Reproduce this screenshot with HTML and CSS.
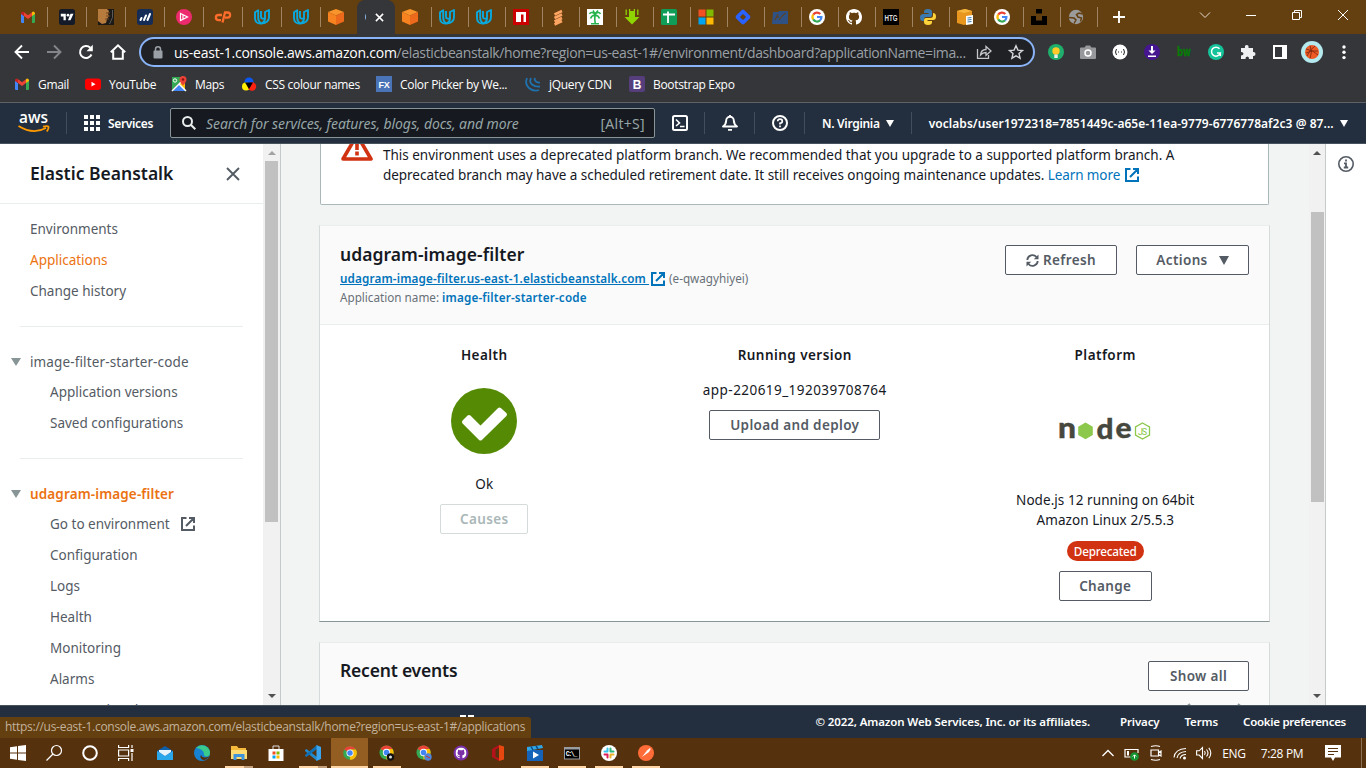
FILE: index.html
```html
<!DOCTYPE html>
<html lang="en">
<head>
<meta charset="utf-8">
<title>Elastic Beanstalk</title>
<link rel="stylesheet" href="styles.css">
</head>
<body>
<svg class="defs" width="0" height="0">
  <symbol id="gmail" viewBox="0 0 16 16"><path fill="#4285f4" d="M1 4v9q0 1 1 1h2V7z"/><path fill="#34a853" d="M15 4v9q0 1-1 1h-2V7z"/><path fill="#c5221f" d="M1 4.500q0-2 2-2l1 .7V7L1 5z"/><path fill="#fbbc04" d="M15 4.500q0-2-2-2l-1 .7V7l3-2z"/><path fill="#ea4335" d="M4 3.200l4 3 4-3V7l-4 3-4-3z"/></symbol>
  <symbol id="udacity" viewBox="0 0 16 16"><path fill="none" stroke="#0aa9dd" stroke-width="1.900" stroke-linejoin="round" d="M1 3.200L4.200 1.300V9q0 3.500 3.300 5.500Q1 15 1 9zM7.500 14.500Q15 14 15 8V1L11 3v6.500q0 3-3.500 5M7 2v6q0 2 4 1.500"/></symbol>
  <symbol id="cube" viewBox="0 0 16 16"><path fill="#f9932b" d="M8 0l8 3-8 3.500L0 3z"/><path fill="#f68220" d="M0 3l8 3.500V16l-8-3.500z"/><path fill="#ed6a1c" d="M16 3L8 6.500V16l8-3.500z"/></symbol>
  <symbol id="google" viewBox="0 0 16 16"><circle cx="8" cy="8" r="8" fill="#fff"/><g fill="none" stroke-width="2.200"><path stroke="#ea4335" d="M4.200 5.600A4.500 4.500 0 0 1 11.300 5"/><path stroke="#fbbc05" d="M4.200 5.600A4.500 4.500 0 0 0 4.200 10.400"/><path stroke="#34a853" d="M4.200 10.400A4.500 4.500 0 0 0 11 11.400"/><path stroke="#4285f4" d="M11 11.400A4.500 4.500 0 0 0 12.400 8H8"/></g></symbol>
  <symbol id="ext" viewBox="0 0 14 14"><path fill="none" stroke="currentColor" stroke-width="2" d="M5.500 1H1v12h12V8.500M8 1h5v5M12.500 1.500L5 9"/></symbol>
  <symbol id="chrome" viewBox="0 0 16 16"><circle cx="8" cy="8" r="7.500" fill="#34a853"/><path fill="#ea4335" d="M8 8L1.500 4.200A7.500 7.500 0 0 1 14.500 4.200H8z"/><path fill="#fbbc05" d="M8 8h-.5L8 15.500A7.500 7.500 0 0 0 14.500 4.200H8z"/><circle cx="8" cy="8" r="3.900" fill="#fff"/><circle cx="8" cy="8" r="3" fill="#4285f4"/></symbol>
  <symbol id="github" viewBox="0 0 16 16"><path d="M8 0C3.580 0 0 3.580 0 8c0 3.540 2.290 6.530 5.470 7.590.4.070.55-.17.55-.38 0-.19-.01-.82-.01-1.490-2.010.37-2.530-.49-2.690-.94-.09-.23-.48-.94-.82-1.130-.28-.15-.68-.52-.01-.53.63-.01 1.080.58 1.230.82.72 1.210 1.870.87 2.330.66.070-.52.28-.87.51-1.070-1.780-.2-3.640-.89-3.640-3.950 0-.87.31-1.590.82-2.150-.08-.2-.36-1.020.08-2.120 0 0 .67-.21 2.200.82.64-.18 1.320-.27 2-.27s1.360.09 2 .27c1.530-1.040 2.200-.82 2.200-.82.44 1.100.16 1.920.08 2.120.51.56.82 1.270.82 2.150 0 3.070-1.870 3.750-3.650 3.950.29.25.54.73.54 1.480 0 1.070-.01 1.930-.01 2.200 0 .21.15.46.55.38A8 8 0 0 0 16 8c0-4.420-3.580-8-8-8z"/></symbol>
</svg>

<div class="tabstrip">
  <div class="tabs tabs-wide">
    <span class="tab"><svg><use href="#gmail"/></svg></span>
    <span class="tab"><svg viewBox="0 0 16 16"><rect width="16" height="16" rx="2.500" fill="#141a27"/><path fill="#fff" d="M1.800 4.800h5v6.500H4.500V7.500H1.800zM11.500 4.800h3l-3 6.500H9z"/><circle cx="9" cy="6.200" r="1.400" fill="#fff"/></svg></span>
    <span class="tab"><svg viewBox="0 0 16 16"><rect width="16" height="16" fill="#1c1a18"/><path fill="#b87b3e" d="M0 0h9l2 2-1 3 1 2-2 3-1 4-4 1-4-3z"/><path stroke="#6a431e" d="M8 4h4M8 7h4M7 10h4"/><path stroke="#5c5a57" d="M14.500 1q1.500 8-3 14" fill="none"/></svg></span>
    <span class="tab"><svg viewBox="0 0 16 16"><rect width="16" height="16" rx="3" fill="#142c56"/><path stroke="#fff" stroke-width="2" stroke-linecap="round" d="M3.500 11l1-2M7 11l2-4.500M10.500 11l2.500-6"/></svg></span>
    <span class="tab"><svg viewBox="0 0 16 16"><circle cx="8" cy="8" r="8" fill="#ee2a6e"/><path fill="none" stroke="#fff" stroke-width="1.200" d="M4.500 4.500v7l7-3.500zM7 6v4"/></svg></span>
    <span class="tab"><svg viewBox="0 0 16 16"><path fill="none" stroke="#ff6c2c" stroke-width="2.300" d="M7 6H3.500a2.600 2.600 0 0 0 0 5.200H6M7.500 13.500L10 3.500h2.500a2.600 2.600 0 0 1 0 5.200H10"/></svg></span>
    <span class="tab"><svg><use href="#udacity"/></svg></span>
    <span class="tab"><svg><use href="#udacity"/></svg></span>
  </div>
  <span class="tab tab-before"><svg><use href="#cube"/></svg></span>
  <div class="tab-active"><i></i><svg viewBox="0 0 10 10"><path stroke="#fff" stroke-width="1.700" d="M1 1l8 8M9 1L1 9"/></svg></div>
  <div class="tabs tabs-narrow">
    <span class="tab"><svg><use href="#cube"/></svg></span>
    <span class="tab"><svg><use href="#udacity"/></svg></span>
    <span class="tab"><svg><use href="#udacity"/></svg></span>
    <span class="tab"><svg viewBox="0 0 16 16"><rect width="16" height="16" fill="#c00"/><path fill="#fff" d="M3 3h10v10h-2.500V5.500H8V13H3z"/></svg></span>
    <span class="tab"><svg viewBox="0 0 16 16"><path stroke="#fda463" stroke-width="2.600" d="M4.500 5.500L12 2M4.500 9L12 5.500M4.500 12.500L12 9M4.500 15.500L12 12"/></svg></span>
    <span class="tab"><svg viewBox="0 0 16 16"><rect width="16" height="16" fill="#fff"/><g fill="none" stroke="#27b34b" stroke-width="1.600"><path d="M8 6q-.7 4 .3 9M4 14.700h8M8 5Q4 2 2.500 5M8 5q4-3 5.500 0M8 6Q5 6 3.500 9.500M8 6q3 0 4.500 3.500M8 5L6 1.500M8 5l3-3.500"/></g></svg></span>
    <span class="tab"><svg viewBox="0 0 16 16"><path fill="#8fd400" d="M5 2h6v6h4.500L8 15.500.5 8H5z"/><path stroke="#8fd400" stroke-width="1.300" d="M2.200.500v5.500M13.800.500v5.500M5.600 0v2M10.400 0v2"/></svg></span>
    <span class="tab"><svg viewBox="0 0 16 16"><rect width="16" height="16" rx="1.500" fill="#0f9d58"/><path stroke="#fff" stroke-width="1.800" d="M2 5.500h12M7 2.500V14"/></svg></span>
    <span class="tab"><svg viewBox="0 0 16 16"><path fill="#f25022" d="M.5.500h7v7h-7z"/><path fill="#7fba00" d="M8.500.500h7v7h-7z"/><path fill="#00a4ef" d="M.5 8.500h7v7h-7z"/><path fill="#ffb900" d="M8.500 8.500h7v7h-7z"/></svg></span>
    <span class="tab"><svg viewBox="0 0 16 16"><rect x="2.200" y="2.200" width="11.600" height="11.600" rx="2" transform="rotate(45 8 8)" fill="#2962ff"/><rect x="5.800" y="5.800" width="4.400" height="4.400" transform="rotate(45 8 8)" fill="#643f0f"/></svg></span>
    <span class="tab"><svg viewBox="0 0 16 16"><path fill="#2f5183" d="M1 3h5l1-1h9v13H0z"/><path fill="none" stroke="#643f0f" d="M3 11l3-6M4 8h3M7 11l4-5 3-2"/></svg></span>
    <span class="tab"><svg><use href="#google"/></svg></span>
    <span class="tab"><svg fill="#fff"><use href="#github"/></svg></span>
    <span class="tab"><svg viewBox="0 0 16 16"><rect width="16" height="16" fill="#000"/><text class="t-htg" x="1.500" y="11.500" textLength="13" lengthAdjust="spacingAndGlyphs">HTG</text></svg></span>
    <span class="tab"><svg viewBox="0 0 16 16"><path fill="#3b7bb0" d="M8 0C5 0 4 1 4 3v1h4.500v1H3Q0 5 0 8.500T3 12h1v-2q0-2 2-2h4q2 0 2-2V3q0-3-4-3z"/><path fill="#ffd43b" d="M8 16c3 0 4-1 4-3v-1H7.500v-1H13q3 0 3-3.500T13 4v2.500Q13 9 10 9H6q-2 0-2 2v2q0 3 4 3z"/></svg></span>
    <span class="tab"><svg viewBox="0 0 16 16"><path fill="#e8961e" d="M0 2l8-2 7 2v12l-8 2-7-2z"/><path fill="#f7b73f" d="M0 2l8-2 7 2-8 2z"/><path fill="#fff" d="M9 7l7-1v9l-7 1z"/><path stroke="#3a7fb5" stroke-width="1.200" d="M10.500 9l4-.5M10.500 11l4-.5M10.500 13l4-.5"/></svg></span>
    <span class="tab"><svg><use href="#google"/></svg></span>
    <span class="tab"><svg viewBox="0 0 16 16"><path fill="#000" d="M5 0h6v4.500H5zM0 7h5v4.500h6V7h5v9H0z"/></svg></span>
    <span class="tab"><svg viewBox="0 0 16 16"><circle cx="8" cy="8" r="7.200" fill="#9b9b9c"/><path fill="none" stroke="#643f0f" stroke-width="1.500" d="M1 8.500l5 .5 2 2-2 3.500M14.500 5L11 4 8.500 5.500 10 8l3.500 1-1 3.500"/></svg></span>
  </div>
  <svg class="newtab" viewBox="0 0 12 12"><path stroke="#fff" stroke-width="1.900" d="M6 0v12M0 6h12"/></svg>
  <div class="winctl">
    <svg viewBox="0 0 12 12"><path fill="none" stroke="#e8ddd0" d="M1 3.500l5 5 5-5"/></svg>
    <svg viewBox="0 0 12 12"><path stroke="#fff" d="M1 6.500h10"/></svg>
    <svg viewBox="0 0 12 12"><path fill="none" stroke="#fff" d="M1.500 3.500h7v7h-7zM3.500 3.500v-2h7v7h-2"/></svg>
    <svg viewBox="0 0 12 12"><path stroke="#fff" d="M1 1l10 10M11 1L1 11"/></svg>
  </div>
</div>

<div class="toolbar">
  <div class="navbtns">
    <svg viewBox="0 0 16 16"><path fill="none" stroke="#fff" stroke-width="1.900" d="M15 8H2M8 1.500L1.500 8 8 14.500"/></svg>
    <svg viewBox="0 0 16 16"><path fill="none" stroke="#84858a" stroke-width="1.900" d="M1 8h13M8 1.500L14.500 8 8 14.500"/></svg>
    <svg viewBox="0 0 16 16"><path fill="none" stroke="#fff" stroke-width="2" d="M13.500 10.500A6 6 0 1 1 12.300 3.800"/><path fill="#fff" d="M14.800.800v6.400H8.500z"/></svg>
    <svg viewBox="0 0 16 16"><path fill="none" stroke="#fff" stroke-width="2" d="M.8 8.200L8 1.300l7.200 6.900M3.200 7v7.700h9.600V7"/></svg>
  </div>
  <div class="omnibox">
    <svg class="lock" viewBox="0 0 10 13"><rect y="4.500" x=".5" width="9" height="8" rx="1" fill="#9aa0a6"/><path fill="none" stroke="#9aa0a6" stroke-width="1.500" d="M2.500 5V3.200a2.500 2.500 0 0 1 5 0V5"/></svg>
    <span class="url"><b>us-east-1.console.aws.amazon.com</b>/elasticbeanstalk/home?region=us-east-1#/environment/dashboard?applicationName=ima...</span>
    <svg class="share" viewBox="0 0 16 16"><path fill="none" stroke="#c4c7ca" stroke-width="1.300" d="M1.500 5v9.300h11V11M4.500 11Q5 5.500 10 5.500V2.500L15 7l-5 4.300V8.500Q6.500 8.500 4.500 11z"/></svg>
    <svg class="star" viewBox="0 0 16 16"><path fill="none" stroke="#d5d7da" stroke-width="1.400" d="M8 1.800l1.900 4.300 4.600.4-3.500 3.100 1.100 4.600L8 11.800l-4.100 2.400L5 9.600 1.500 6.500l4.600-.4z"/></svg>
  </div>
  <div class="exts">
    <svg viewBox="0 0 16 16"><circle cx="8" cy="8" r="8" fill="#1fae6b"/><circle cx="8" cy="7" r="3.700" fill="#ffc928"/><path fill="#eee" d="M6.300 10.500h3.400V14H6.300z"/></svg>
    <svg viewBox="0 0 16 16"><path fill="#97989b" d="M1 3.500h3.500L6 1.500h4l1.500 2H15q1 0 1 1V14q0 1-1 1H1q-1 0-1-1V4.500q0-1 1-1z"/><circle cx="8" cy="9" r="3" fill="none" stroke="#fff" stroke-width="1.500"/></svg>
    <svg viewBox="0 0 16 16"><circle cx="8" cy="8" r="7.500" fill="#fff"/><path fill="none" stroke="#222" d="M4.500 5Q2.500 8 4.500 11M11.500 5q2 3 0 6M6 8h1M9 8h1"/></svg>
    <svg viewBox="0 0 16 16"><circle cx="8" cy="8" r="8" fill="#45168f"/><path fill="#fff" d="M7 2h2v4.500h2.500L8 10 4.500 6.500H7zM4 11.500h8V13H4z"/></svg>
    <svg viewBox="0 0 16 16"><text class="t-bw" x="1" y="12" textLength="14" lengthAdjust="spacingAndGlyphs">bw</text></svg>
    <svg viewBox="0 0 16 16"><circle cx="8" cy="8" r="8" fill="#15c39a"/><path fill="none" stroke="#fff" stroke-width="1.500" d="M11.500 4.800A4.500 4.500 0 1 0 12.300 9H9M12.300 9v3"/></svg>
    <svg viewBox="0 0 16 16"><path fill="#eff0f2" d="M1 4h4q-.6-3 1.700-3T8.500 4H13v4q2.500-.3 2.500 2T13 12v3H9q.3-2.500-1.700-2.500T5.500 15H1v-3.500q2.500 0 2.500-1.800T1 8z"/></svg>
    <svg viewBox="0 0 16 16"><path fill="#fff" d="M1 1h14v14H1z"/><path fill="#35363a" d="M3 3h7v10H3z"/></svg>
    <svg class="avatar" viewBox="0 0 22 22"><circle cx="11" cy="11" r="11" fill="#b4e9ee"/><circle cx="11" cy="11" r="7" fill="#ed5a24"/><path fill="none" stroke="#7a2610" stroke-width=".8" d="M5 8q7 1 12 6M9 4.500q3 6 0 13M14 5q-6 4-8 10M5 12q6-3 12-2"/></svg>
    <svg viewBox="0 0 16 16"><g fill="#fff"><circle cx="8" cy="3" r="1.700"/><circle cx="8" cy="8.300" r="1.700"/><circle cx="8" cy="13.600" r="1.700"/></g></svg>
  </div>
</div>

<div class="bookmarks">
  <span style="width:71px"><svg><use href="#gmail"/></svg>Gmail</span>
  <span style="width:86px"><svg viewBox="0 0 16 16"><rect y="2.500" width="16" height="11.500" rx="3" fill="red"/><path fill="#fff" d="M6.500 5.800v4.800l4-2.400z"/></svg>YouTube</span>
  <span style="width:70px"><svg viewBox="0 0 16 16"><path fill="#34a853" d="M1 1h13L1 14z"/><path fill="#4285f4" d="M8 8l7 7H2z"/><path fill="#fbbc04" d="M14 2v12L8 8z"/><path stroke="#fff" stroke-width="1.500" d="M1 15L14 2M8 8l7 7"/><path fill="#ea4335" d="M12 0a3.500 3.500 0 0 1 3.500 3.500Q15.500 6 12 9.500 8.500 6 8.500 3.500A3.500 3.500 0 0 1 12 0z"/><circle cx="12" cy="3.500" r="1.200" fill="#811"/><circle cx="4" cy="4.500" r="1.700" fill="none" stroke="#fff"/></svg>Maps</span>
  <span style="width:135px"><svg viewBox="0 0 16 16"><circle cx="8" cy="6" r="4.500" fill="#0b59f5"/><circle cx="5" cy="10.500" r="4" fill="#fe0"/><circle cx="11" cy="10.500" r="4.200" fill="#f21"/><path d="M4 6.500h8L8 13z"/></svg>CSS colour names</span>
  <span style="width:149px"><svg viewBox="0 0 16 16"><rect width="16" height="16" fill="#4a74b8"/><text class="t-fx" x="2.500" y="11.500" textLength="11">FX</text></svg>Color Picker by We...</span>
  <span style="width:104px"><svg viewBox="0 0 16 16"><g fill="none" stroke="#1f72ae" stroke-width="1.800"><path d="M2 2Q-.5 8 4 12t10 2"/><path d="M6 2q-2 4 1 6.500t8 2"/><path d="M10 2q-1 2 1 3.500t4 1"/></g></svg>jQuery CDN</span>
  <span><svg viewBox="0 0 16 16"><rect width="16" height="16" rx="2" fill="#563d7c"/><text class="t-b" x="3.800" y="12.500">B</text></svg>Bootstrap Expo</span>
</div>

<header class="aws">
  <svg class="awslogo" viewBox="0 0 32 22"><text class="t-aws" x="1" y="11" textLength="29" lengthAdjust="spacingAndGlyphs">aws</text><path fill="none" stroke="#f90" stroke-width="1.800" d="M.5 14Q15 23 28 16M25 14.600q5-1.200 5.500.3t-1.700 4.600"/></svg>
  <i class="vsep"></i>
  <svg class="grid" viewBox="0 0 16 16"><path fill="#fff" d="M0 0h4v4H0zM6 0h4v4H6zM12 0h4v4h-4zM0 6h4v4H0zM6 6h4v4H6zM12 6h4v4h-4zM0 12h4v4H0zM6 12h4v4H6zM12 12h4v4h-4z"/></svg>
  <b class="services">Services</b>
  <div class="search"><svg viewBox="0 0 14 14"><path fill="none" stroke="#eaeded" stroke-width="2" d="M9.300 9.300L13.300 13.300M1 5.500a4.500 4.500 0 1 0 9 0a4.500 4.500 0 1 0-9 0"/></svg><em>Search for services, features, blogs, docs, and more</em><span>[Alt+S]</span></div>
  <div class="awsicons">
    <svg viewBox="0 0 16 16"><rect x="1" y="1" width="14" height="14" rx="1.500" fill="none" stroke="#fff" stroke-width="2"/><path fill="none" stroke="#fff" stroke-width="1.600" d="M4 4.500L7.500 8 4 11M8 11.500h4.500"/></svg><i class="vsep"></i>
    <svg viewBox="0 0 16 16"><path fill="none" stroke="#fff" stroke-width="1.900" stroke-linejoin="round" d="M1 11.500Q4 9.500 4.200 5.500a3.800 3.800 0 0 1 7.600 0Q12 9.500 15 11.500zM8 0v2M6 14.900h4"/></svg><i class="vsep"></i>
    <svg viewBox="0 0 16 16"><circle cx="8" cy="8" r="7" fill="none" stroke="#fff" stroke-width="2"/><path fill="none" stroke="#fff" stroke-width="1.700" d="M5.700 6.300Q5.700 4.200 8 4.200t2.300 2Q10.300 8 8 8.300v1.200M8 10.600v1.700"/></svg><i class="vsep"></i>
  </div>
  <b class="region">N. Virginia</b><i class="caret"></i>
  <i class="vsep vsep-user"></i>
  <b class="user">voclabs/user1972318=7851449c-a65e-11ea-9779-6776778af2c3 @ 87...</b><i class="caret"></i>
</header>

<div class="page">
  <aside class="side">
    <div class="side-head"><h2>Elastic Beanstalk</h2><svg viewBox="0 0 14 14"><path stroke="#545b64" stroke-width="1.900" d="M1 1l12 12M13 1L1 13"/></svg></div>
    <nav>
      <a>Environments</a><a class="hot">Applications</a><a>Change history</a>
      <hr>
      <a class="group">image-filter-starter-code</a>
      <a class="sub">Application versions</a><a class="sub">Saved configurations</a>
      <hr>
      <a class="group hot strong">udagram-image-filter</a>
      <a class="sub">Go to environment<svg><use href="#ext"/></svg></a><a class="sub">Configuration</a><a class="sub">Logs</a><a class="sub">Health</a><a class="sub">Monitoring</a><a class="sub">Alarms</a><a class="sub">Managed updates</a>
    </nav>
  </aside>
  <div class="sbar sbar-side"><i class="up dim"></i><i class="thumb"></i><i class="down"></i></div>
  <main>
    <section class="alert">
      <svg viewBox="0 0 32 28"><path fill="none" stroke="#d13212" stroke-width="3.600" stroke-linejoin="round" d="M16 2L30 26H2z"/><path stroke="#d13212" stroke-width="3.600" d="M16 8v9M16 18.500v4"/></svg>
      <p><span class="l1">This environment uses a deprecated platform branch. We recommended that you upgrade to a supported platform branch. A</span><br><span class="l2">deprecated branch may have a scheduled retirement date. It still receives ongoing maintenance updates.</span> <a>Learn more<svg><use href="#ext"/></svg></a></p>
    </section>
    <section class="card">
      <div class="card-head">
        <div>
          <h1>udagram-image-filter</h1>
          <p class="envurl"><a>udagram-image-filter.us-east-1.elasticbeanstalk.com </a><svg><use href="#ext"/></svg><span>(e-qwagyhiyei)</span></p>
          <p class="appname">Application name: <b>image-filter-starter-code</b></p>
        </div>
        <div class="actions">
          <button style="width:112px"><svg viewBox="0 0 13 13"><path fill="none" stroke="#545b64" stroke-width="1.800" d="M1.300 6A5.200 5.200 0 0 1 10.500 3M11.700 7A5.200 5.200 0 0 1 2.500 10"/><path fill="#545b64" d="M12.500.500V5.200H7.800zM.5 12.500V7.800h4.700z"/></svg>Refresh</button>
          <button style="width:113px">Actions<i></i></button>
        </div>
      </div>
      <div class="cols">
        <div class="col">
          <h3>Health</h3>
          <svg class="ok" viewBox="0 0 66 66"><circle cx="33" cy="33" r="33" fill="#558b04"/><path fill="#fff" stroke="#fff" stroke-width="4" stroke-linejoin="round" d="M13 34l5-5 11.500 11.500L48.500 21.500l5.500 5L29.500 50.500z"/></svg>
          <p>Ok</p>
          <button class="off" style="width:88px">Causes</button>
        </div>
        <div class="col">
          <h3>Running version</h3>
          <p class="ver">app-220619_192039708764</p>
          <button style="width:171px">Upload and deploy</button>
        </div>
        <div class="col">
          <h3>Platform</h3>
          <svg class="node" viewBox="0 0 92 28"><g class="t-node"><text x="-1" y="24.500" textLength="18" lengthAdjust="spacingAndGlyphs">n</text><text x="37.500" y="25.500" textLength="17" lengthAdjust="spacingAndGlyphs">d</text><text x="56.500" y="25" textLength="16" lengthAdjust="spacingAndGlyphs">e</text></g><path fill="#8cc84b" d="M26.500 9.500l7.300 4.200v8.400l-7.300 4.200-7.300-4.200v-8.400z"/><path fill="none" stroke="#8cc84b" stroke-width="1.300" d="M83.500 10l7 4v8l-7 4-7-4v-8z"/><text class="t-js" x="79" y="21.500" textLength="9">JS</text></svg>
          <p class="plat">Node.js 12 running on 64bit<br>Amazon Linux 2/5.5.3</p>
          <span class="badge">Deprecated</span>
          <button style="width:93px">Change</button>
        </div>
      </div>
    </section>
    <section class="card events">
      <div class="card-head"><h1>Recent events</h1><button style="width:101px">Show all</button></div>
      <div class="pager"><svg viewBox="0 0 8 12"><path fill="none" stroke="#879596" stroke-width="2" d="M7 1L1 6l6 5"/></svg><svg viewBox="0 0 8 12"><path fill="none" stroke="#879596" stroke-width="2" d="M1 1l6 5-6 5"/></svg></div>
    </section>
  </main>
  <div class="sbar sbar-main"><i class="up"></i><i class="thumb"></i><i class="down"></i></div>
  <div class="info"><svg viewBox="0 0 16 16"><circle cx="8" cy="8" r="7.200" fill="none" stroke="#545b64" stroke-width="1.600"/><path fill="none" stroke="#545b64" stroke-width="1.800" d="M8 3.500v2M6 7.400h2V11M5.800 11.500h4.400"/></svg></div>
</div>

<footer>
  <i class="peek"></i>
  <b class="copy">© 2022, Amazon Web Services, Inc. or its affiliates.</b><b class="priv">Privacy</b><b class="terms">Terms</b><b class="cookie">Cookie preferences</b>
  <div class="status">https://us-east-1.console.aws.amazon.com/elasticbeanstalk/home?region=us-east-1#/applications</div>
</footer>

<div class="taskbar">
  <div class="sys">
    <span><svg viewBox="0 0 16 16"><path fill="#fff" d="M0 2.200l7-1v6.300H0zM8 1l8-1v7.500H8zM0 8.500h7v6.300l-7-1zM8 8.500h8V16l-8-1z"/></svg></span>
    <span><svg viewBox="0 0 16 16"><circle cx="10.500" cy="5.500" r="5" fill="none" stroke="#fff" stroke-width="1.200"/><path stroke="#fff" stroke-width="1.300" d="M7 9L.5 15.500"/></svg></span>
    <span><svg viewBox="0 0 16 16"><circle cx="8" cy="8" r="6.800" fill="none" stroke="#fff" stroke-width="2"/></svg></span>
    <span><svg viewBox="0 0 16 16"><path fill="none" stroke="#fff" stroke-width="1.200" d="M.6 0v2.500h10V0M.6 5h10v6H.6zM.6 16v-2.500h10V16M14 0v3M14 8v8"/><path fill="#fff" d="M12.500 4h3v3h-3z"/></svg></span>
  </div>
  <div class="apps">
    <span><svg viewBox="0 0 16 16"><path fill="#0f5ea8" d="M0 6l8-5 8 5v9H0z"/><path fill="#2aa6ea" d="M0 15V6l8 5 8-5v9z"/><path fill="#e8f4fc" d="M2 5h12v2l-6 4-6-4z"/></svg></span>
    <span><svg viewBox="0 0 16 16"><circle cx="8" cy="8" r="8" fill="#1781d2"/><path fill="#39c98a" d="M2 3A8 8 0 0 1 16 8q0 3-3 3.500-3 .5-3-2Q10 4 2 3z"/><path fill="#56310e" d="M7 10q1 4 8 1.500Q12 16 9 15 5 13 7 10z"/></svg></span>
    <span class="run two"><svg viewBox="0 0 16 16"><path fill="#f5b93b" d="M0 1h6l1.500 2H15v11H0z"/><path fill="#ffdc73" d="M0 5h16v9H0z"/><path fill="#3d94dd" d="M2.500 15V9h11v6h-3v-3h-5v3z"/></svg></span>
    <span><svg viewBox="0 0 16 16"><path fill="#fff" d="M.5 4h15v12H.5z"/><path fill="none" stroke="#ddd" d="M5 4V1h6v3"/><path fill="#f25022" d="M4.500 6.500h3v3h-3z"/><path fill="#7fba00" d="M8.500 6.500h3v3h-3z"/><path fill="#00a4ef" d="M4.500 10.500h3v3h-3z"/><path fill="#ffb900" d="M8.500 10.500h3v3h-3z"/></svg></span>
    <span class="run two"><svg viewBox="0 0 16 16"><path fill="#2489ca" d="M0 5l1.500-1L12 12v4L0 6z"/><path fill="#1070b3" d="M0 11l1.500 1L12 4V0L0 10z"/><path fill="#3aa5ee" d="M11.500 0L16 2v12l-4.500 2z"/></svg></span>
    <span class="run cur"><svg viewBox="-.8 -.8 17.600 17.600"><use href="#chrome" width="16" height="16"/></svg></span>
    <span class="run"><svg viewBox="0 0 16 16"><use href="#chrome" width="15" height="15"/><circle cx="11.500" cy="12" r="3.700" fill="#111"/><circle cx="11.500" cy="12" r="1.500" fill="#ddd"/></svg></span>
    <span><svg viewBox="0 0 16 16"><use href="#chrome" width="15" height="15"/><circle cx="12" cy="12" r="3.700" fill="#4f86d8"/><path stroke="#c33" d="M10 11l4 2"/></svg></span>
    <span><svg viewBox="0 0 16 16"><circle cx="8" cy="8" r="7.500" fill="#7b2fa8"/><g fill="#fff" transform="translate(2.500 2.500) scale(.69)"><use href="#github" width="16" height="16"/></g></svg></span>
    <span><svg viewBox="0 0 16 16"><path fill="#e8480f" d="M9 0l5 1.500v13L9 16z"/><path fill="#b5121b" d="M2 4l7-4v3L5.500 4.500v7.500L9 13v3l-7-4z"/></svg></span>
    <span class="run"><svg viewBox="0 0 16 16"><path fill="#1463b8" d="M0 5h16v11H0z"/><path fill="#2fa7e7" d="M0 2l15-2 1 3L0 6z"/><path stroke="#0d4a8c" stroke-width="1.500" d="M4 1.500L6 5M9 1l2 3"/><path fill="#fff" d="M6 6.500v7l6-3.500z"/></svg></span>
    <span class="run"><svg viewBox="0 0 16 16"><path fill="#999da1" d="M0 2h16v12.500H0z"/><path fill="#000" d="M1 4.500h14v9H1z"/><text class="t-cmd" x="1.800" y="11.300" textLength="11.500">C:\_</text></svg></span>
    <span class="run"><svg viewBox="0 0 16 16"><circle cx="8" cy="8" r="8" fill="#fff"/><g stroke-width="2" stroke-linecap="round"><path stroke="#36c5f0" d="M6.500 3.500v3M3.500 6.500h3"/><path stroke="#2eb67d" d="M9.500 3.500v3M9.500 6.500h3"/><path stroke="#ecb22e" d="M9.500 9.500v3M9.500 9.500h3"/><path stroke="#e01e5a" d="M6.500 9.500v3M3.500 9.500h3"/></g></svg></span>
    <span class="run"><svg viewBox="0 0 16 16"><circle cx="8" cy="8" r="8" fill="#ff6c37"/><path fill="#fff" d="M4 12l5-6.500L12 3l.7 1L11 7z"/></svg></span>
  </div>
  <div class="tray">
    <svg class="chev" viewBox="0 0 16 16"><path fill="none" stroke="#fff" stroke-width="1.300" d="M2.500 11L8 5.500l5.500 5.500"/></svg>
    <svg viewBox="0 0 16 16"><path fill="none" stroke="#fff" stroke-width="1.200" d="M8 12H1V4.500h13V8"/><path fill="#fff" d="M3 6h2v4.500H3z"/><circle cx="10.500" cy="11.500" r="4.300" fill="#159331"/><path fill="none" stroke="#fff" d="M10.500 13.500V10M8.800 11.500l1.700-1.700 1.700 1.700"/></svg>
    <svg viewBox="0 0 16 16"><path fill="none" stroke="#fff" stroke-width="1.200" d="M3 5h7.500v6H3zM10.500 7.500L13 6v5l-2.500-1.500M3 1.500q5-1.500 9 0M3 14.500q5 1.500 9 0"/></svg>
    <svg viewBox="0 0 16 16"><path fill="none" stroke="#fff" stroke-width="1.100" d="M2 12.500Q3 4 14 3.500M5 13q1-6 9-6.500M8 13.500q1-4 6-4"/><circle cx="12.500" cy="13" r="1.500" fill="#fff"/></svg>
    <svg viewBox="0 0 16 16"><path fill="none" stroke="#fff" stroke-width="1.100" d="M.6 5.800h2.600L6.500 2.500v11L3.200 10H.6zM8.500 6q1.500 2 0 4M10.500 4.500q3 3.500 0 7M12.800 2.800q4 5.200 0 10.400"/></svg>
    <span class="lang">ENG</span><span class="time">7:28 PM</span>
    <svg class="note" viewBox="0 0 16 16"><path fill="#fff" d="M0 0h16v12.500h-6L8 16l-2-3.500H0z"/><path stroke="#56310e" stroke-width="1.200" d="M3 3.500h10M3 6.500h10M3 9.500h6"/></svg>
    <i class="peekdesk"></i>
  </div>
</div>
</body>
</html>
```
FILE: styles.css
```css
* { box-sizing: border-box; margin: 0; padding: 0; }
body { width: 1366px; height: 768px; overflow: hidden; display: flex; flex-direction: column; font-family: "Noto Sans", "Open Sans", sans-serif; background: #fff; }
svg { display: block; flex: none; width: 16px; height: 16px; overflow: visible; }
.defs { display: none; }
i { display: block; flex: none; }

/* browser chrome */
.tabstrip { height: 34px; flex: none; background: #643f0f; display: flex; align-items: center; padding-left: 9px; }
.tabs { display: flex; }
.tab { height: 20px; display: flex; align-items: center; border-right: 1px solid #a08461; }
.tabs-wide .tab { width: 39px; padding-left: 11px; }
.tabs-narrow .tab { width: 37px; padding-left: 7px; }
.tab-before { width: 36px; padding-left: 7px; border: 0; }
.tab-active { width: 38px; height: 34px; border-radius: 8px 8px 0 0; background: #35363a; display: flex; align-items: center; padding-left: 8px; }
.tab-active i { width: 2px; height: 6px; border-left: 1px solid #8ab4e8; border-radius: 50%; }
.tab-active svg { width: 9px; height: 9px; margin-left: 8px; }
.newtab { width: 12px; height: 12px; margin-left: 15px; }
.winctl { display: flex; gap: 34px; margin-left: 74px; padding-bottom: 5px; }
.winctl svg { width: 12px; height: 12px; }
.toolbar { height: 36px; flex: none; background: #35363a; display: flex; align-items: center; }
.navbtns { display: flex; gap: 16px; padding-left: 14px; width: 139px; }
.omnibox { width: 896px; height: 30px; border: 2px solid #8ab4f8; border-radius: 15px; background: #202124; display: flex; align-items: center; padding-left: 12px; font: 14px "Open Sans", sans-serif; color: #9aa0a6; }
.lock { width: 10px; height: 13px; margin-right: 11px; }
.url { width: 802px; white-space: nowrap; letter-spacing: -.35px; }
.url b { font-weight: 400; color: #fff; letter-spacing: -.23px; }
.share { margin-right: 16px; }
.url { letter-spacing: -.39px; }
.exts { display: flex; gap: 16px; padding-left: 13px; align-items: center; }
.exts .avatar { width: 22px; height: 22px; margin: 0 -3px; }
.bookmarks { height: 32px; flex: none; background: #35363a; display: flex; align-items: center; padding: 0 0 4px 14px; font: 12px "Open Sans", sans-serif; color: #fff; white-space: nowrap; }
.bookmarks span { display: flex; align-items: center; gap: 8px; letter-spacing: -.32px; }

/* logo lettering */
.t-htg { font: bold 9px "Liberation Sans", sans-serif; fill: #ddd; }
.t-bw { font: bold 12px "DejaVu Sans", sans-serif; fill: #097a09; stroke: #097a09; stroke-width: .4px; }
.t-fx { font: bold 9px "Liberation Sans", sans-serif; fill: #fff; }
.t-b { font: bold 12px "Liberation Sans", sans-serif; fill: #fff; }
.t-aws { font: 600 17px "Open Sans", sans-serif; fill: #fff; }
.t-node text { font: 900 28px Lato, sans-serif; fill: #46483e; stroke: #46483e; stroke-width: .4px; }
.t-js { font: 9px Roboto, sans-serif; fill: #8cc84b; }
.t-cmd { font: bold 6.5px "Liberation Mono", monospace; fill: #fff; }

/* console header */
.aws { height: 42px; flex: none; background: #232f3e; border-top: 1px solid #5f6164; border-bottom: 1px solid #46525c; display: flex; align-items: center; color: #fff; font-size: 12px; white-space: nowrap; padding-left: 18px; }
.aws b { font-weight: 600; }
.vsep { width: 1px; height: 22px; background: #414d5c; }
.awslogo { width: 32px; height: 22px; margin-right: 16px; }
.grid { margin-left: 17px; }
.services { width: 62px; margin-left: 8px; letter-spacing: -.35px; }
.search { width: 485px; height: 30px; border: 1px solid #879596; border-radius: 2px; background: #16191f; display: flex; align-items: center; padding: 0 9px 0 11px; font-size: 14px; color: #95a5a6; }
.search svg { width: 14px; height: 14px; margin-right: 10px; }
.search span { margin-left: auto; letter-spacing: .3px; }
.search em { letter-spacing: -.08px; }
.awsicons { display: flex; align-items: center; gap: 16.400px; margin-left: 17px; width: 150px; }
.region { letter-spacing: -.3px; }
.caret { border: 4.500px solid transparent; border-top: 7px solid #fff; border-bottom: 0; margin-left: 6px; }
.vsep-user { margin: 0 17px; }
.user { letter-spacing: .05px; }

/* page */
.page { height: 561px; flex: none; display: flex; overflow: hidden; background: #f2f3f3; }
.side { width: 263px; background: #fff; overflow: hidden; flex: none; }
.side-head { height: 60px; border-bottom: 1px solid #eaeded; display: flex; align-items: center; justify-content: space-between; padding: 0 23px 0 30px; }
.side-head h2 { font-size: 17.500px; font-weight: 600; color: #16191f; padding-bottom: 2px; }
.side-head svg { width: 14px; height: 14px; }
nav { padding: 10px 20px 0; font-size: 13.500px; color: #545b64; }
nav a { display: flex; align-items: center; height: 31px; padding: 0 0 2px 10px; white-space: nowrap; }
nav .sub { padding-left: 30px; }
nav .sub svg { width: 14px; height: 14px; margin-left: 11px; }
nav hr { border: 0; height: 1px; background: #eaeded; margin: 19px 0; }
nav .hot { color: #ec7211; }
nav .group { padding: 0; letter-spacing: .13px; }
nav .strong { font-weight: 600; letter-spacing: .13px; }
nav .group::before { content: ""; border: 5.500px solid transparent; border-top: 8px solid #879596; border-bottom: 0; margin: 0 9px 0 -9px; }
.sbar { flex: none; width: 17px; background: #f1f1f1; display: flex; flex-direction: column; align-items: center; padding: 7px 0; }
.sbar .thumb { width: 13px; background: #c1c1c1; }
.sbar .up { border: 4px solid transparent; border-bottom: 4px solid #505050; border-top: 0; }
.sbar .dim { border-bottom-color: #a3a3a3; }
.sbar .down { border: 4px solid transparent; border-top: 4px solid #505050; border-bottom: 0; margin-top: auto; }
.sbar-side { width: 18px; border-right: 1px solid #c6caca; }
.sbar-side .thumb { height: 361px; margin-top: 6px; }
.sbar-main { border-right: 1px solid #c6caca; }
.sbar-main .thumb { height: 290px; margin-top: 57px; }
.info { flex: 1; background: #fff; padding: 12px 0 0 12px; }
main { width: 1028px; flex: none; padding: 0 39px 0 38px; }
.alert { height: 61px; margin: 0 1px; background: #fff; border: 1px solid #aab7b8; border-top: 0; border-radius: 0 0 2px 2px; display: flex; align-items: flex-start; padding-left: 20px; }
.alert svg { width: 32px; height: 28px; margin-top: -11px; }
.alert p { font-size: 13.500px; line-height: 20px; color: #16191f; margin: 1px 0 0 10px; white-space: nowrap; letter-spacing: -.012px; }
.alert .l2 { letter-spacing: -.04px; }
.alert a { color: #0073bb; display: inline-flex; align-items: center; letter-spacing: -.1px; }
.alert a svg { width: 14px; height: 14px; margin: 0 0 0 5px; }
.card { margin-top: 20px; background: #fff; border: 1px solid #d5dbdb; border-top-color: #eaeded; border-bottom-color: #879596; height: 397px; }
.card-head { height: 99px; background: #fafafa; border-bottom: 1px solid #eaeded; display: flex; justify-content: space-between; padding: 19px 20px 0; }
.card h1 { font-size: 17.500px; line-height: 20px; margin-top: -1px; font-weight: 600; color: #16191f; letter-spacing: .05px; }
.envurl, .appname { font-size: 11.700px; line-height: 19px; color: #687078; display: flex; align-items: center; white-space: pre; }
.envurl { margin-top: 5px; height: 19px; }
.envurl a { font-weight: 600; color: #0073bb; text-decoration: underline; letter-spacing: .14px; }
.envurl svg { width: 14px; height: 14px; color: #0073bb; margin: 0 4px 0 2px; }
.appname b { font-weight: 600; color: #0073bb; letter-spacing: .16px; }
.actions { display: flex; gap: 19px; }
button { height: 30px; border: 1px solid #545b64; border-radius: 2px; background: #fff; color: #545b64; font: 600 13.500px "Noto Sans", sans-serif; letter-spacing: .36px; display: flex; align-items: center; justify-content: center; white-space: nowrap; flex: none; }
button svg { width: 13px; height: 13px; margin-right: 4px; }
button i { border: 5.500px solid transparent; border-top: 9px solid #545b64; border-bottom: 0; margin-left: 11px; }
button.off { color: #aab7b8; border-color: #d5dbdb; }
.cols { display: grid; grid-template-columns: repeat(3, 310.500px); padding: 20px 0 0 9px; }
.col { display: flex; flex-direction: column; align-items: center; text-align: center; font-size: 13.500px; line-height: 20px; color: #16191f; }
.col h3 { font-size: 13.500px; font-weight: 600; letter-spacing: .45px; }
.ok { width: 66px; height: 66px; margin: 23px 0 20px; }
.off { margin-top: 10px; }
.ver { margin: 15px 0 10px; letter-spacing: .45px; }
.node { width: 92px; height: 28px; margin: 48px 0 49px; }
.plat { letter-spacing: .06px; }
.badge { height: 20px; width: 77px; border-radius: 10px; background: #d13212; color: #fff; font-size: 11.700px; font-weight: 500; letter-spacing: -.2px; margin: 11px 0 10px; }
.events { height: 120px; }
.events .card-head { height: 60px; border: 0; padding-top: 18px; }
.events h1 { letter-spacing: -.2px; }
.pager { display: flex; justify-content: flex-end; gap: 46px; padding: 0 24px; background: #fafafa; height: 60px; }
.pager svg { width: 8px; height: 12px; }

footer { height: 33px; flex: none; background: #232f3e; border-top: 1px solid #46525c; position: relative; display: flex; justify-content: flex-end; align-items: center; color: #fff; font-size: 11.500px; padding: 0 20px 2px 0; white-space: nowrap; }
footer b { font-weight: 600; letter-spacing: -.11px; }
footer .priv { margin-left: 30px; letter-spacing: -.15px; }
.terms { margin-left: 25px; }
footer .cookie { margin-left: 25px; letter-spacing: -.28px; padding-top: 1px; }
.peek { width: 14px; height: 2px; background: linear-gradient(90deg, #fff 6px, transparent 6px 8px, #fff 8px); position: absolute; left: 460px; top: 9px; }
.status { position: absolute; left: 0; bottom: 0; width: 531px; height: 21px; border-radius: 0 3px 0 0; background: #643f0f; color: #c2b29d; font: 12px/20px "Open Sans", sans-serif; letter-spacing: -.29px; padding-left: 5px; }

.taskbar { flex: none; height: 30px; background: #56310e; display: flex; color: #fff; }
.taskbar span { display: flex; align-items: center; justify-content: center; }
.sys, .apps { display: flex; }
.sys span { width: 36px; }
.apps { margin-left: 2px; }
.apps span { width: 37px; position: relative; }
.apps .run::after { content: ""; position: absolute; left: 5px; bottom: 0; width: 28px; height: 2px; background: #ffd5a5; }
.apps .two::after { background: linear-gradient(90deg, #ffd5a5 19px, #c3a07b 19px); }
.apps .cur { background: #945d21; }
.apps .cur::after { left: 0; width: 37px; }
.tray { margin-left: auto; display: flex; align-items: center; font: 12px "Open Sans", sans-serif; letter-spacing: -.35px; gap: 8px; }
.lang { width: 24px; margin-left: 2px; }
.time { width: 44px; margin: 0 13px 0 6px; white-space: nowrap; }
.peekdesk { width: 1px; height: 30px; background: #8b6f52; margin: 0 4px 0 12px; }
```
